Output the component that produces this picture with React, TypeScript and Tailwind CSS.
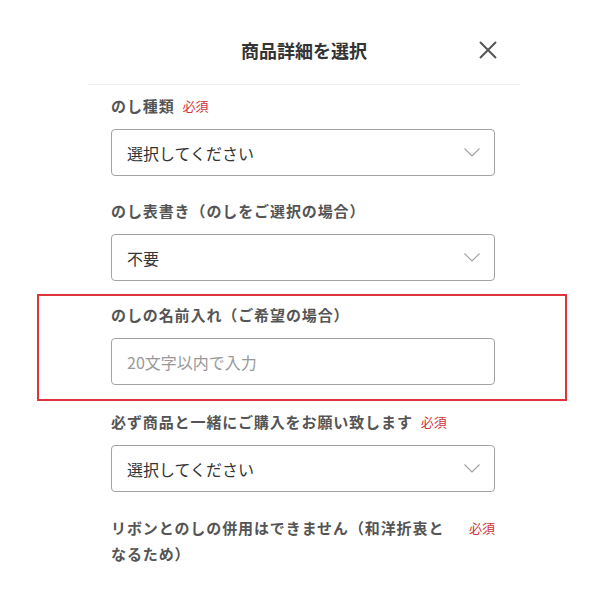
import React from "react";

const font = { fontFamily: '"Noto Sans CJK JP", "Noto Sans", sans-serif' };

function Chevron() {
  return (
    <svg width="16" height="9" viewBox="0 0 16 9" fill="none" className="shrink-0">
      <path d="M0.5 0.5 L8 8 L15.5 0.5" stroke="#a0a0a0" strokeWidth="1.1" />
    </svg>
  );
}

function Select({ text }: { text: string }) {
  return (
    <div className="mt-[12px] flex h-[47px] w-[384px] items-center justify-between rounded-[4px] border border-[#a3a3a3] pl-[15px] pr-[14px]">
      <span className="text-[16px] text-[#333]">{text}</span>
      <Chevron />
    </div>
  );
}

function Label({ text, req }: { text: string; req?: boolean }) {
  return (
    <div className="flex h-[22px] items-center">
      <span className="text-[15px] font-bold tracking-[0.9px] text-[#555]">{text}</span>
      {req && <span className="ml-[8px] text-[13px] text-[#d0343a]">必須</span>}
    </div>
  );
}

export default function App() {
  return (
    <div className="min-h-[600px] w-[600px] bg-white" style={font}>
      <div className="relative ml-[88px] w-[432px]">
        <div className="flex h-[84px] items-start justify-center pt-[38px]">
          <span className="text-[18px] font-bold leading-[24px] text-[#333]">商品詳細を選択</span>
        </div>
        <svg className="absolute left-[391px] top-[41px]" width="18" height="18" viewBox="0 0 18 18">
          <path d="M1 1 L17 17 M17 1 L1 17" stroke="#555" strokeWidth="2" />
        </svg>
        <div className="h-px bg-[#eeeeee]" />
        <div className="px-[23px] pt-[10px]">
          <Label text="のし種類" req />
          <Select text="選択してください" />
          <div className="mt-[24px]">
            <Label text="のし表書き（のしをご選択の場合）" />
          </div>
          <Select text="不要" />
        </div>
      </div>
      <div className="ml-[37px] mt-[13px] w-[530px] border-2 border-[#e0343c] pb-[14px] pl-[72px] pt-[8px]">
        <Label text="のしの名前入れ（ご希望の場合）" />
        <div className="mt-[12px] flex h-[47px] w-[384px] items-center rounded-[4px] border border-[#a3a3a3] pl-[15px]">
          <span className="text-[16px] text-[#999]">20文字以内で入力</span>
        </div>
      </div>
      <div className="ml-[111px] w-[384px] pt-[10px]">
        <Label text="必ず商品と一緒にご購入をお願い致します" req />
        <Select text="選択してください" />
        <div className="mt-[23px] flex items-start justify-between">
          <span className="w-[345px] text-[15px] font-bold leading-[26px] tracking-[0.9px] text-[#555]">
            リボンとのしの併用はできません（和洋折衷となるため）
          </span>
          <span className="text-[13px] leading-[26px] text-[#d0343a]">必須</span>
        </div>
      </div>
    </div>
  );
}
